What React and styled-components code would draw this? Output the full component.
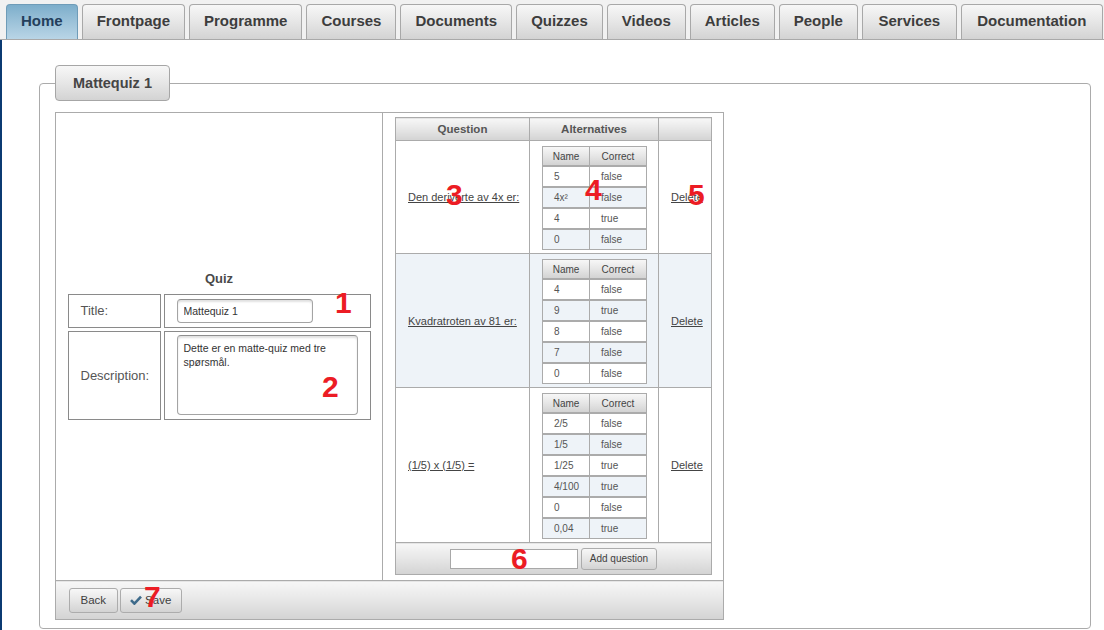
import React from 'react';
import styled, { createGlobalStyle, css } from 'styled-components';

const GlobalStyle = createGlobalStyle`
    html, body {
        margin: 0;
        padding: 0;
        background: #ffffff;
    }
    body {
        font-family: "Liberation Sans", Arial, sans-serif;
        color: #444444;
    }
`;

const gloss = css`
    background: linear-gradient(to bottom, #f7f7f7 0%, #e6e6e6 50%, #d3d3d3 100%);
`;

// page frame
const Page = styled.div`
    position: relative;
    display: flex;
    flex-direction: column;
    min-height: 630px;
`;

const TabBar = styled.nav`
    display: flex;
    gap: 4px;
    height: 40px;
    box-sizing: border-box;
    padding: 4px 0 0 6px;
    background: #f1f1f1;
    border-bottom: 1px solid #a9a9a9;
    overflow: hidden;
`;

const Tab = styled.div`
    flex: none;
    min-width: 20px;
    height: 35px;
    box-sizing: border-box;
    padding: 0 ${p => p.$px || 14}px;
    line-height: 32px;
    font-size: 15px;
    font-weight: 700;
    color: #3d3d3d;
    border: 1px solid #a8a8a8;
    border-bottom: none;
    border-radius: 4px 4px 0 0;
    ${gloss};
    ${p => p.$active && css`
        color: #243f5c;
        border-color: #6f9cb8;
        background: linear-gradient(to bottom, #7daecb 0%, #9cc2d9 50%, #b9d5e6 100%);
    `}
`;

const Body = styled.main`
    flex: 1;
    border-left: 2px solid #0b3a72;
    padding: 25px 0 2px 37px;
`;

const Frame = styled.fieldset`
    width: 1052px;
    box-sizing: border-box;
    margin: 0;
    padding: 11px 15px 8px;
    border: 1px solid #ababab;
    border-radius: 4px;
`;

const FrameTitle = styled.legend`
    height: 36px;
    box-sizing: border-box;
    padding: 0 17px;
    line-height: 34px;
    font-size: 14.5px;
    font-weight: 700;
    color: #454545;
    border: 1px solid #a6a6a6;
    border-radius: 4px;
    ${gloss};
`;

// editor layout table
const Editor = styled.table`
    width: 669px;
    border-collapse: collapse;
    border: 1px solid #ababab;
`;

const FormCell = styled.td`
    width: 327px;
    padding: 0;
    border-right: 1px solid #ababab;
    vertical-align: middle;
    text-align: center;
`;

const ListCell = styled.td`
    padding: 4px 11px 5px 12px;
    vertical-align: top;
`;

const FooterCell = styled.td`
    height: 38px;
    padding: 0 13px;
    border-top: 1px solid #ababab;
    ${gloss};
`;

const ButtonRow = styled.div`
    display: flex;
    gap: 2px;
    align-items: center;
`;

const Button = styled.button`
    display: inline-flex;
    align-items: center;
    gap: 3px;
    height: ${p => p.$h || 25}px;
    box-sizing: border-box;
    padding: 0 ${p => p.$px || 10}px;
    font-family: "Liberation Sans", Arial, sans-serif;
    font-size: ${p => p.$fs || 11.5}px;
    color: #3f3f3f;
    border: 1px solid #acacac;
    border-radius: 3px;
    ${gloss};
`;

// quiz form
const QuizHeading = styled.div`
    font-size: 13px;
    font-weight: 700;
    color: #4a4a4a;
    margin-bottom: 5px;
`;

const FormTable = styled.table`
    margin: 0 auto;
    border-collapse: separate;
    border-spacing: 3px;
    text-align: left;
`;

const Label = styled.td`
    width: 79px;
    height: ${p => p.$h}px;
    padding: 0 0 0 12px;
    border: 1px solid #8a8a8a;
    font-size: 13px;
    color: #555555;
    vertical-align: middle;
`;

const Field = styled.td`
    width: 193px;
    padding: 0 0 0 12px;
    border: 1px solid #8a8a8a;
    vertical-align: middle;
`;

const fieldLook = css`
    display: block;
    box-sizing: border-box;
    font-family: "Liberation Sans", Arial, sans-serif;
    font-size: 10.5px;
    color: #333333;
    border: 1px solid #a4a4a4;
    border-top-color: #8f8f8f;
    border-radius: 4px;
    box-shadow: inset 0 2px 2px rgba(0, 0, 0, 0.12);
    background: #ffffff;
    outline: none;
`;

const TextInput = styled.input`
    ${fieldLook};
    width: ${p => p.$w}px;
    height: ${p => p.$h}px;
    padding: 0 6px;
`;

const TextArea = styled.textarea`
    ${fieldLook};
    width: 181px;
    height: 80px;
    padding: 5px 6px;
    line-height: 14px;
    resize: none;
`;

// questions table
const Questions = styled.table`
    width: 317px;
    table-layout: fixed;
    border-collapse: collapse;
    border: 1px solid #ababab;
`;

const QHead = styled.th`
    height: 22px;
    padding: 0;
    border: 1px solid #ababab;
    font-size: 11.5px;
    font-weight: 700;
    color: #555555;
    ${gloss};
`;

const QRow = styled.tr`
    background: ${p => (p.$alt ? '#eef3f8' : '#ffffff')};
`;

const QCell = styled.td`
    padding: ${p => (p.$alts ? '5px 12px 3px' : '0 12px')};
    border: 1px solid #ababab;
    vertical-align: middle;
    font-size: 11px;
    white-space: nowrap;
`;

const QLink = styled.a`
    color: #444444;
    text-decoration: underline;
    cursor: pointer;
`;

const QFooter = styled.td`
    height: 31px;
    padding: 0;
    border: 1px solid #ababab;
    text-align: center;
    ${gloss};
`;

const AddRow = styled.div`
    display: flex;
    justify-content: center;
    align-items: center;
    gap: 3px;
`;

const Plain = styled.input`
    width: 128px;
    height: 20px;
    box-sizing: border-box;
    border: 1px solid #a8a8a8;
    background: #ffffff;
    outline: none;
`;

// nested alternatives
const Alts = styled.table`
    width: 105px;
    table-layout: fixed;
    border-collapse: separate;
    border-spacing: 0;
`;

const AltHead = styled.th`
    width: ${p => p.$w}px;
    box-sizing: border-box;
    height: 20px;
    padding: 0;
    border: 1px solid #ababab;
    border-left-width: ${p => (p.$first ? 1 : 0)}px;
    font-size: 10px;
    font-weight: 400;
    color: #444444;
    ${gloss};
`;

const AltCell = styled.td`
    box-sizing: border-box;
    height: 21px;
    padding: 0 0 0 11px;
    border: 1px solid #ababab;
    border-left-width: ${p => (p.$first ? 1 : 0)}px;
    font-size: 10px;
    color: #555555;
    background: ${p => (p.$alt ? '#eef3f8' : '#ffffff')};
`;

// red callouts on top of the screenshot
const Callout = styled.span`
    position: absolute;
    left: ${p => p.$x}px;
    top: ${p => p.$y}px;
    font-family: "Liberation Sans", Arial, sans-serif;
    font-size: 30px;
    font-weight: 700;
    line-height: 1;
    color: #ec1c24;
    pointer-events: none;
`;

const tabs = ['Home', 'Frontpage', 'Programme', 'Courses', 'Documents', 'Quizzes', 'Videos', 'Articles', 'People', 'Services', 'Documentation', ''];

const questions = [
    { text: 'Den deriverte av 4x er:', alts: [['5', 'false'], ['4x²', 'false'], ['4', 'true'], ['0', 'false']] },
    { text: 'Kvadratroten av 81 er:', alts: [['4', 'false'], ['9', 'true'], ['8', 'false'], ['7', 'false'], ['0', 'false']] },
    { text: '(1/5) x (1/5) =', alts: [['2/5', 'false'], ['1/5', 'false'], ['1/25', 'true'], ['4/100', 'true'], ['0', 'false'], ['0,04', 'true']] },
];

const callouts = [
    ['1', 335, 288], ['2', 322, 372], ['3', 446, 180], ['4', 585, 175],
    ['5', 688, 180], ['6', 511, 544], ['7', 144, 582],
];

function CheckIcon() {
    return (
        <svg width="12" height="10" viewBox="0 0 12 10">
            <path d="M1 5.2 L4.4 8.6 L11 1.6" fill="none" stroke="#3e6b8b" strokeWidth="2.6" strokeLinejoin="miter" />
        </svg>
    );
}

function Alternatives({ alts }) {
    return (
        <Alts>
            <thead>
                <tr>
                    <AltHead $w={48} $first>Name</AltHead>
                    <AltHead $w={57}>Correct</AltHead>
                </tr>
            </thead>
            <tbody>
                {alts.map(([name, correct], i) => (
                    <tr key={i}>
                        <AltCell $first $alt={i % 2 === 1}>{name}</AltCell>
                        <AltCell $alt={i % 2 === 1}>{correct}</AltCell>
                    </tr>
                ))}
            </tbody>
        </Alts>
    );
}

export default function App() {
    return (
        <Page>
            <GlobalStyle />
            <TabBar>
                {tabs.map((t, i) => (
                    <Tab key={i} $active={i === 0} $px={t === 'Services' || t === 'Documentation' ? 15.5 : 14}>{t}</Tab>
                ))}
            </TabBar>
            <Body>
                <Frame>
                    <FrameTitle>Mattequiz 1</FrameTitle>
                    <Editor>
                        <tbody>
                            <tr>
                                <FormCell>
                                    <QuizHeading>Quiz</QuizHeading>
                                    <FormTable>
                                        <tbody>
                                            <tr>
                                                <Label $h={32}>Title:</Label>
                                                <Field>
                                                    <TextInput $w={136} $h={24} defaultValue="Mattequiz 1" />
                                                </Field>
                                            </tr>
                                            <tr>
                                                <Label $h={87}>Description:</Label>
                                                <Field>
                                                    <TextArea defaultValue="Dette er en matte-quiz med tre spørsmål." />
                                                </Field>
                                            </tr>
                                        </tbody>
                                    </FormTable>
                                </FormCell>
                                <ListCell>
                                    <Questions>
                                        <colgroup>
                                            <col style={{ width: 134 }} />
                                            <col style={{ width: 129 }} />
                                            <col />
                                        </colgroup>
                                        <thead>
                                            <tr>
                                                <QHead>Question</QHead>
                                                <QHead>Alternatives</QHead>
                                                <QHead></QHead>
                                            </tr>
                                        </thead>
                                        <tbody>
                                            {questions.map((q, i) => (
                                                <QRow key={q.text} $alt={i === 1}>
                                                    <QCell><QLink>{q.text}</QLink></QCell>
                                                    <QCell $alts><Alternatives alts={q.alts} /></QCell>
                                                    <QCell><QLink>Delete</QLink></QCell>
                                                </QRow>
                                            ))}
                                            <tr>
                                                <QFooter colSpan={3}>
                                                    <AddRow>
                                                        <Plain />
                                                        <Button $h={22} $px={8} $fs={10}>Add question</Button>
                                                    </AddRow>
                                                </QFooter>
                                            </tr>
                                        </tbody>
                                    </Questions>
                                </ListCell>
                            </tr>
                            <tr>
                                <FooterCell colSpan={2}>
                                    <ButtonRow>
                                        <Button $px={10.5}>Back</Button>
                                        <Button $px={9.5}><CheckIcon />Save</Button>
                                    </ButtonRow>
                                </FooterCell>
                            </tr>
                        </tbody>
                    </Editor>
                </Frame>
            </Body>
            {callouts.map(([n, x, y]) => <Callout key={n} $x={x} $y={y}>{n}</Callout>)}
        </Page>
    );
}
